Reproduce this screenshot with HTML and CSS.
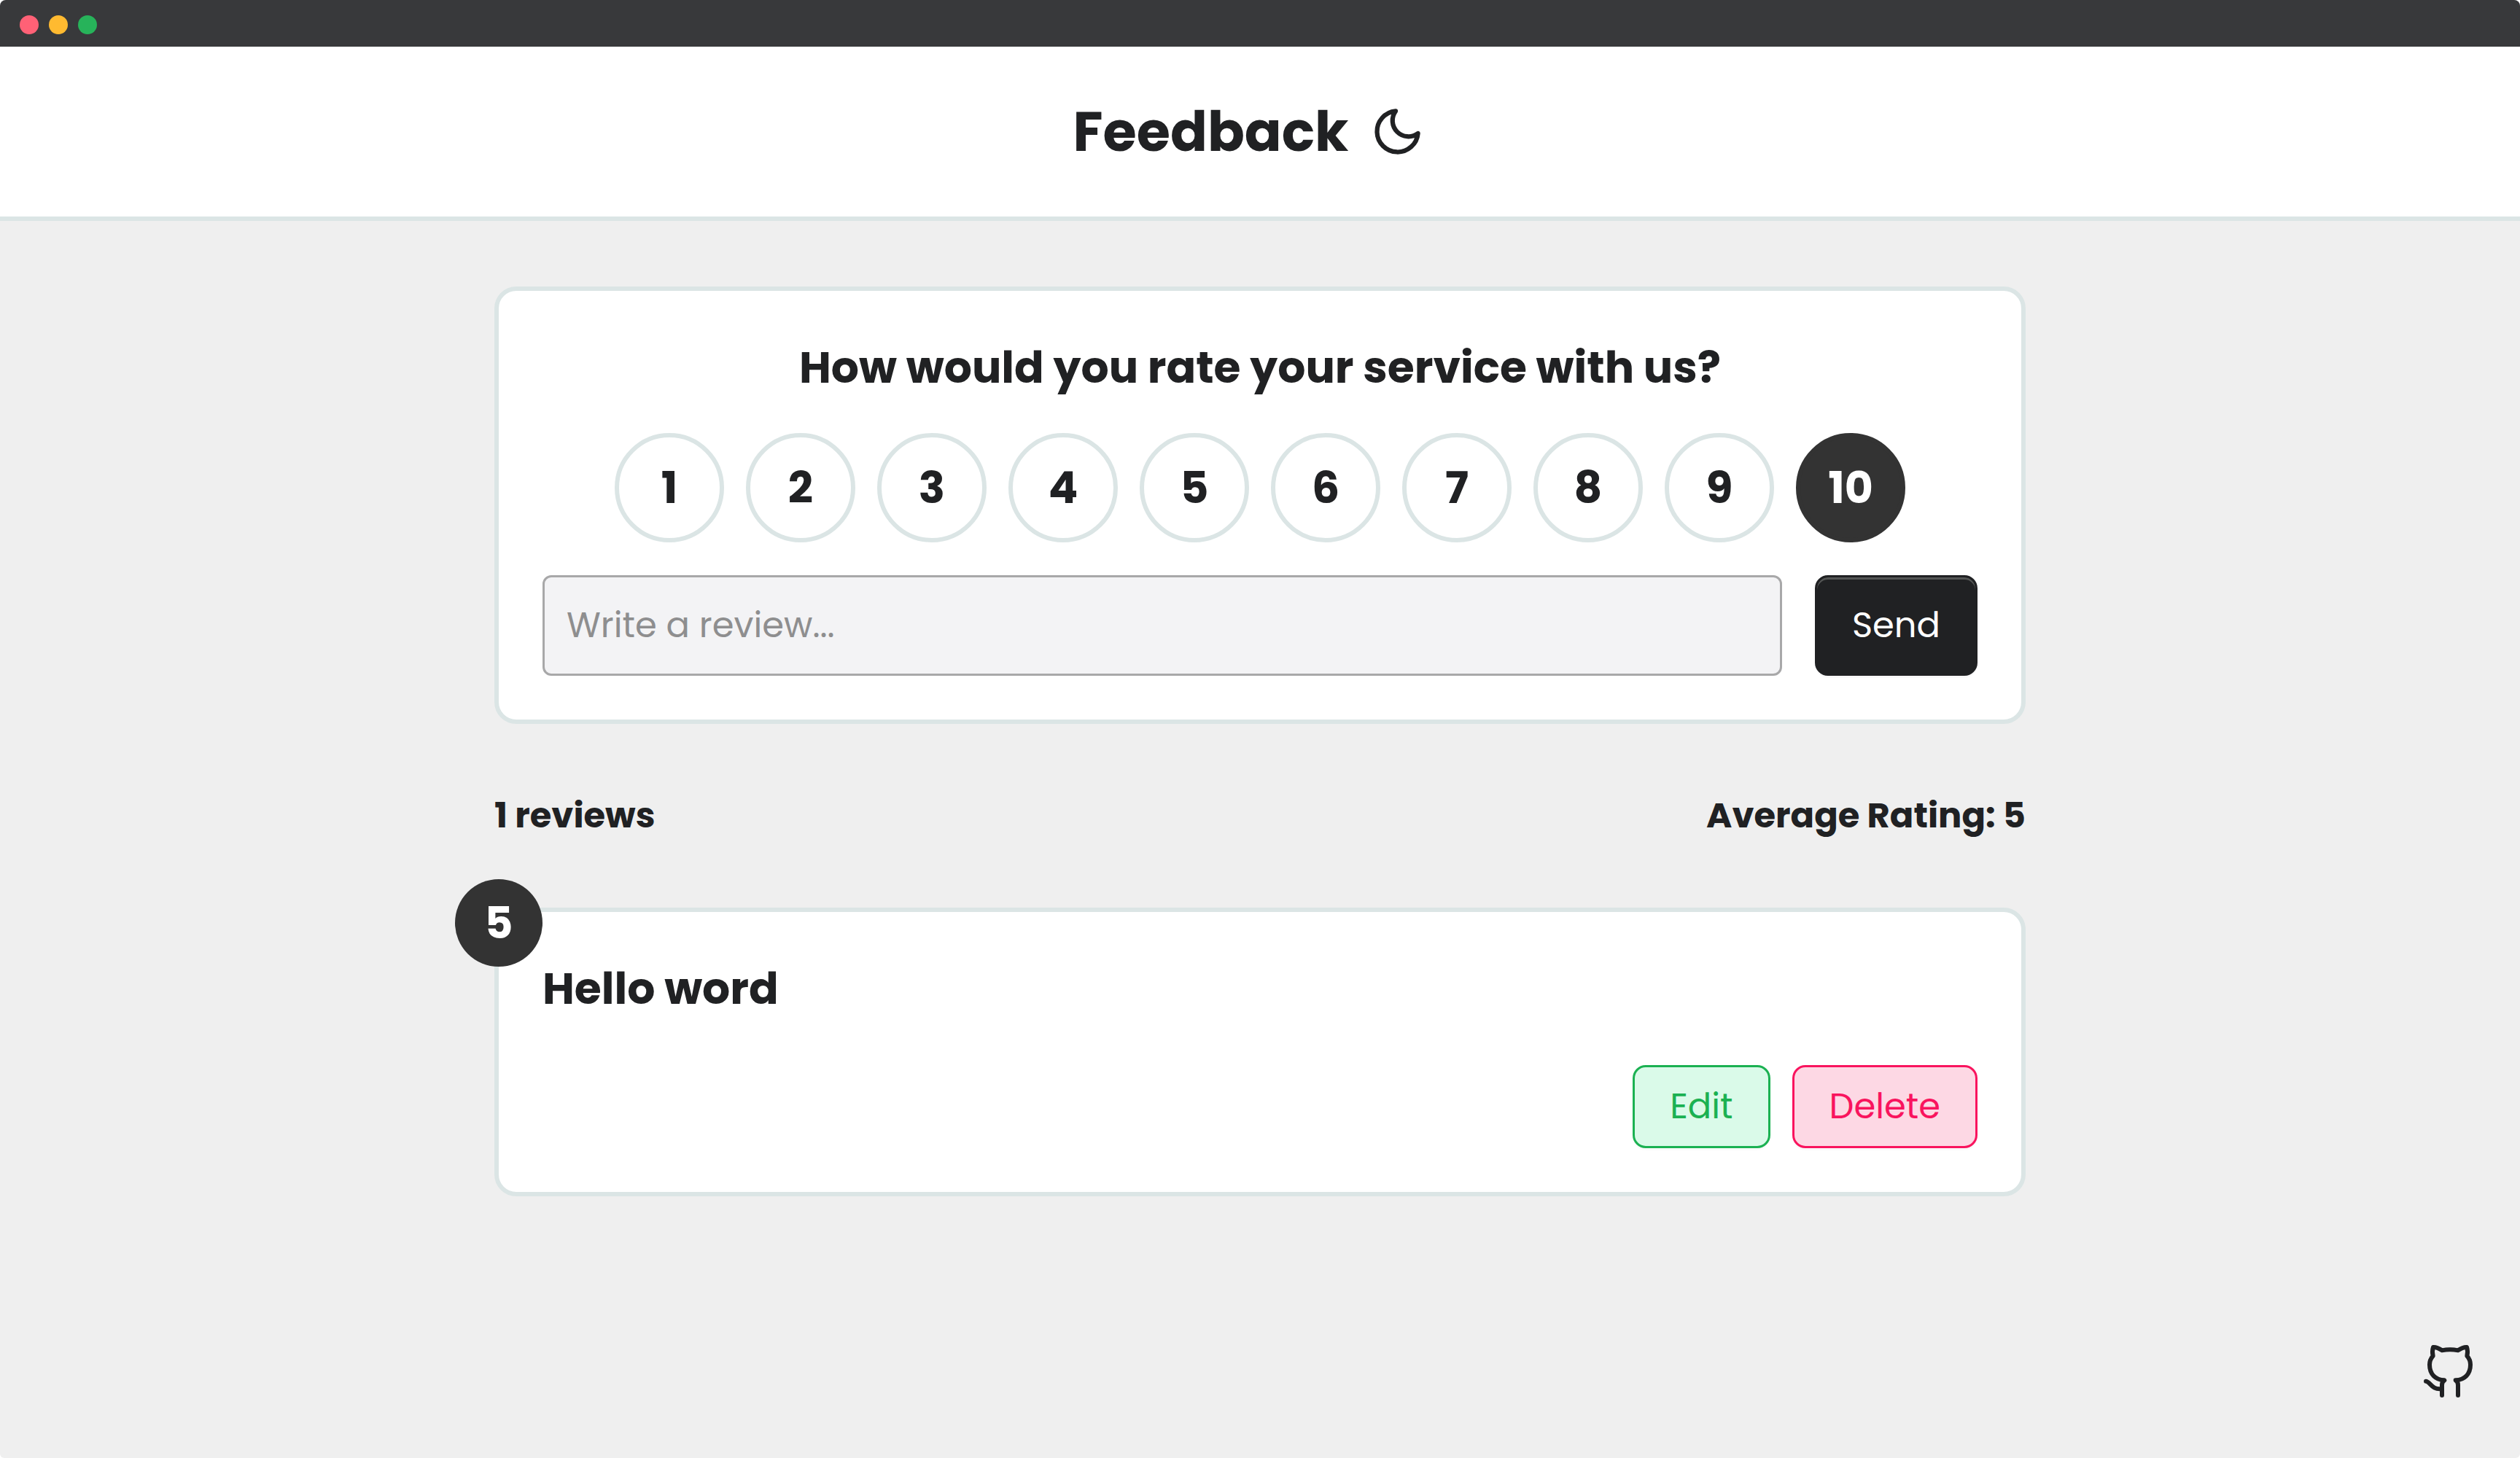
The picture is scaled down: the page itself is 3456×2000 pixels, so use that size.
FILE: index.html
```html
<!DOCTYPE html>
<html lang="en">
<head>
<meta charset="utf-8">
<meta name="viewport" content="width=device-width, initial-scale=1">
<title>Feedback</title>
<link rel="stylesheet" href="styles.css">
</head>
<body>
<div class="window">
  <div class="titlebar">
    <span class="dot dot-close"></span>
    <span class="dot dot-minimize"></span>
    <span class="dot dot-zoom"></span>
  </div>

  <header class="header">
    <h1 class="title">Feedback</h1>
    <button class="theme-toggle" type="button" aria-label="Toggle dark mode">
      <svg class="theme-icon" viewBox="0 0 24 24" fill="none" stroke="currentColor" stroke-width="2" stroke-linecap="round" stroke-linejoin="round" aria-hidden="true"><path d="M21 12.79A9 9 0 1 1 11.21 3 7 7 0 0 0 21 12.79z"/></svg>
    </button>
  </header>

  <main class="main">
    <form class="card">
      <h2 class="heading heading-center" id="question">How would you rate your service with us?</h2>
      <div class="ratings" role="radiogroup" aria-labelledby="question">
        <label class="rating"><input class="rating-input" type="radio" name="rating" value="1"><span class="rating-label">1</span></label>
        <label class="rating"><input class="rating-input" type="radio" name="rating" value="2"><span class="rating-label">2</span></label>
        <label class="rating"><input class="rating-input" type="radio" name="rating" value="3"><span class="rating-label">3</span></label>
        <label class="rating"><input class="rating-input" type="radio" name="rating" value="4"><span class="rating-label">4</span></label>
        <label class="rating"><input class="rating-input" type="radio" name="rating" value="5"><span class="rating-label">5</span></label>
        <label class="rating"><input class="rating-input" type="radio" name="rating" value="6"><span class="rating-label">6</span></label>
        <label class="rating"><input class="rating-input" type="radio" name="rating" value="7"><span class="rating-label">7</span></label>
        <label class="rating"><input class="rating-input" type="radio" name="rating" value="8"><span class="rating-label">8</span></label>
        <label class="rating"><input class="rating-input" type="radio" name="rating" value="9"><span class="rating-label">9</span></label>
        <label class="rating"><input class="rating-input" type="radio" name="rating" value="10" checked><span class="rating-label">10</span></label>
      </div>
      <div class="review-row">
        <input class="review-input" type="text" placeholder="Write a review..." aria-label="Write a review">
        <button class="button button-send" type="submit">Send</button>
      </div>
    </form>

    <div class="stats">
      <p class="stat">1 reviews</p>
      <p class="stat">Average Rating: 5</p>
    </div>

    <article class="card review">
      <span class="badge">5</span>
      <h2 class="heading">Hello word</h2>
      <div class="actions">
        <button class="button button-edit" type="button">Edit</button>
        <button class="button button-delete" type="button">Delete</button>
      </div>
    </article>
  </main>

  <a class="github" href="#" aria-label="GitHub">
    <svg class="github-icon" viewBox="0 0 228 246" fill="none" stroke="currentColor" stroke-width="18" stroke-linecap="round" stroke-linejoin="round" aria-hidden="true"><path d="M87 222v-43c0-8 2-14 10-19C60 158 36 135 36 96c0-14 5-26 14-36-3-12-3-24 1-36 12-1 24 5 36 13 22-4 44-4 66 0 12-8 24-14 36-13 4 12 4 24 1 36 9 10 14 22 14 36 0 39-24 62-61 64 8 5 10 11 10 19v43"/><path d="M21 164c16 0 24 38 66 31"/></svg>
  </a>
</div>
</body>
</html>
```
FILE: styles.css
```css
* {
  box-sizing: border-box;
  margin: 0;
}

body {
  background: #fff;
  color: #202123;
  font-family: Poppins, Inter, "Liberation Sans", sans-serif;
}

.window {
  min-height: 100vh;
  overflow: hidden;
  border-radius: 8px 8px 6px 6px;
  background: #efefef;
}

.titlebar {
  display: flex;
  align-items: center;
  gap: 14px;
  height: 64px;
  padding: 4px 27px 0;
  background: #38393b;
}

.dot {
  width: 26px;
  height: 26px;
  border-radius: 50%;
}

.dot-close { background: #ff6176; }
.dot-minimize { background: #ffba30; }
.dot-zoom { background: #27b35a; }

.header {
  display: flex;
  align-items: center;
  justify-content: center;
  padding: 49px 60px;
  border-bottom: 6px solid #dbe5e5;
  background: #fff;
}

.title {
  font-size: 75px;
  line-height: 112px;
}

.theme-toggle {
  display: flex;
  padding: 30px;
  border: 0;
  background: none;
  color: inherit;
}

.theme-icon {
  width: 75px;
  height: 75px;
}

.main {
  width: 100%;
  max-width: 2100px;
  margin: 90px auto;
}

.card {
  padding: 60px;
  border: 6px solid #dbe5e5;
  border-radius: 30px;
  background: #fff;
}

.heading {
  font-size: 60px;
  line-height: 90px;
}

.heading-center {
  text-align: center;
}

.ratings {
  display: flex;
  justify-content: center;
  gap: 30px;
  margin: 45px 0;
}

.rating {
  position: relative;
}

.rating-input {
  position: absolute;
  inset: 0;
  opacity: 0;
}

.rating-label {
  display: grid;
  place-items: center;
  width: 150px;
  height: 150px;
  border: 6px solid #dbe5e5;
  border-radius: 50%;
  font-size: 60px;
  font-weight: 700;
}

.rating-input:checked + .rating-label {
  border-color: #333;
  background: #333;
  color: #fff;
}

.review-row {
  display: flex;
  gap: 45px;
}

.review-input {
  flex: 1;
  min-width: 0;
  height: 138px;
  padding: 0 30px;
  border: 3px solid #a8a8a9;
  border-radius: 12px;
  background: #f3f3f5;
  color: inherit;
  font: inherit;
  font-size: 48px;
}

.review-input::placeholder {
  color: #8e8e8f;
}

.button {
  padding: 18px 48px;
  border: 3px solid;
  border-radius: 18px;
  box-shadow: 0 3px 0 rgb(0 0 0 / 2%);
  font: inherit;
  font-size: 48px;
  line-height: 72px;
}

.button-send {
  border-color: #202123;
  background: #202123;
  box-shadow: inset 0 3px 0 #545655, 0 3px 0 rgb(0 0 0 / 2%);
  color: #fff;
}

.button-edit {
  border-color: #1bb152;
  background: #dafae9;
  color: #1bb152;
}

.button-delete {
  border-color: #f9145e;
  background: #fdd8e4;
  color: #f9145e;
}

.stats {
  display: flex;
  justify-content: space-between;
  margin: 90px 0;
}

.stat {
  font-size: 48px;
  font-weight: 700;
  line-height: 72px;
}

.review {
  position: relative;
}

.badge {
  position: absolute;
  top: -45px;
  left: -60px;
  display: grid;
  place-items: center;
  width: 120px;
  height: 120px;
  border-radius: 50%;
  background: #333;
  color: #fff;
  font-size: 60px;
  font-weight: 700;
}

.actions {
  display: flex;
  justify-content: flex-end;
  gap: 30px;
  margin-top: 60px;
}

.github {
  position: fixed;
  right: 60px;
  bottom: 78px;
  color: inherit;
}

.github-icon {
  display: block;
  width: 76px;
  height: 82px;
}
```
